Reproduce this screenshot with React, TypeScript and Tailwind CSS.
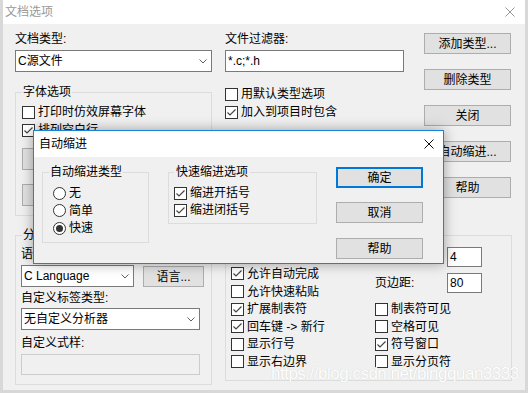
import React from 'react';

const Check = ({ checked }: { checked?: boolean }) => (
  <span className="w-[13px] h-[13px] border border-[#333] bg-white flex items-center justify-center shrink-0">
    {checked && (
      <svg width="11" height="11" viewBox="0 0 11 11">
        <path d="M1.5 5.5 L4 8 L9.5 2.5" fill="none" stroke="#444" strokeWidth="1.2" />
      </svg>
    )}
  </span>
);

const Radio = ({ checked }: { checked?: boolean }) => (
  <span className="w-[13px] h-[13px] rounded-full border border-[#333] bg-white flex items-center justify-center shrink-0">
    {checked && <span className="w-[7px] h-[7px] rounded-full bg-[#333]" />}
  </span>
);

const CheckRow = ({ label, checked, className = '' }: { label: string; checked?: boolean; className?: string }) => (
  <div className={`flex items-center gap-[3px] ${className}`}>
    <Check checked={checked} />
    <span className="whitespace-nowrap">{label}</span>
  </div>
);

const Button = ({ label, className = '' }: { label?: string; className?: string }) => (
  <div className={`w-[87px] h-[21px] bg-[#e1e1e1] border border-[#adadad] flex items-center justify-center ${className}`}>
    {label}
  </div>
);

const Combo = ({ value, className = '' }: { value: string; className?: string }) => (
  <div className={`h-[22px] border border-[#7a7a7a] bg-white flex items-center justify-between pl-[2px] pr-[4px] ${className}`}>
    <span>{value}</span>
    <svg width="8" height="5" viewBox="0 0 8 5">
      <path d="M0.5 0.5 L4 4 L7.5 0.5" fill="none" stroke="#606060" />
    </svg>
  </div>
);

const Group = ({
  title,
  className = '',
  legend = '',
  children,
}: {
  title: string;
  className?: string;
  legend?: string;
  children?: React.ReactNode;
}) => (
  <fieldset className={`border border-[#dcdcdc] ${className}`}>
    <legend className={`h-[14px] leading-[14px] whitespace-nowrap ${legend}`}>{title}</legend>
    {children}
  </fieldset>
);

const CloseX = ({ color }: { color: string }) => (
  <svg width="10" height="10" viewBox="0 0 10 10">
    <path d="M0.5 0.5 L9.5 9.5 M9.5 0.5 L0.5 9.5" stroke={color} strokeWidth="1" />
  </svg>
);

export default function App() {
  return (
    <div className="relative w-[528px] h-[393px] overflow-hidden bg-[#d8d8d8] text-[12px] leading-[14px] text-black font-['Liberation_Sans','Noto_Sans_CJK_SC',sans-serif]">
      {/* 文档选项 window */}
      <div className="ml-[3px] w-[522px] h-[390px] bg-[#f0f0f0] flex flex-col">
        <div className="h-[24px] bg-white flex items-center justify-between pl-[2px] pr-[10px]">
          <span className="text-[#999]">文档选项</span>
          <CloseX color="#999" />
        </div>

        <div className="flex pt-[8px] pl-[12px]">
          <div className="w-[197px] flex flex-col">
            <div>文档类型:</div>
            <Combo value="C源文件" className="mt-[4px]" />
            <Group title="字体选项" className="mt-[13px] h-[131px] pl-[6px]" legend="px-[1px]">
              <CheckRow label="打印时仿效屏幕字体" className="mt-[4px] h-[18px]" />
              <CheckRow label="排列空白行" checked className="h-[18px]" />
              {/* buttons hidden behind the 自动缩进 dialog */}
              <Button className="mt-[9px] !w-[100px] !h-[22px]" />
              <Button className="mt-[14px] !w-[100px] !h-[22px]" />
            </Group>
          </div>

          <div className="ml-[13px] w-[179px] flex flex-col">
            <div>文件过滤器:</div>
            <div className="mt-[4px] h-[22px] border border-[#7a7a7a] bg-white flex items-center pl-[2px]">*.c;*.h</div>
            <CheckRow label="用默认类型选项" className="mt-[13px] h-[18px]" />
            <CheckRow label="加入到项目时包含" checked className="h-[18px]" />
          </div>

          <div className="ml-[20px] mt-[1px] flex flex-col gap-[15px]">
            <Button label="添加类型..." />
            <Button label="删除类型" />
            <Button label="关闭" />
            <Button label="自动缩进..." />
            <Button label="帮助" />
          </div>
        </div>

        <div className="flex pl-[12px] mt-[12px]">
          <Group title="分析器" className="w-[197px] h-[157px] pl-[5px]" legend="ml-[1px] px-[1px]">
            <div className="mt-[5px]">语言:</div>
            <div className="flex items-start mt-[4px]">
              <Combo value="C Language" className="w-[113px]" />
              <Button label="语言..." className="ml-[9px] mt-[1px] !w-[61px]" />
            </div>
            <div className="mt-[4px]">自定义标签类型:</div>
            <Combo value="无自定义分析器" className="mt-[3px] w-[179px]" />
            <div className="mt-[6px]">自定义式样:</div>
            <div className="mt-[4px] w-[179px] h-[21px] border border-[#cccccc] bg-[#f0f0f0]" />
          </Group>

          <Group title="编辑选项" className="ml-[13px] w-[287px] h-[153px] pl-[5px]" legend="ml-[1px] px-[1px]">
            <div className="flex">
              <div className="w-[144px] pt-[23.2px] flex flex-col">
                <CheckRow label="允许自动完成" checked className="h-[17.6px]" />
                <CheckRow label="允许快速粘贴" className="h-[17.6px]" />
                <CheckRow label="扩展制表符" checked className="h-[17.6px]" />
                <CheckRow label="回车键 -> 新行" checked className="h-[17.6px]" />
                <CheckRow label="显示行号" className="h-[17.6px]" />
                <CheckRow label="显示右边界" className="h-[17.6px]" />
              </div>
              <div className="pt-[5px] flex flex-col">
                <div className="flex items-center h-[20px]">
                  <span className="w-[72px]" />
                  <div className="w-[35px] h-[20px] border border-[#7a7a7a] bg-white flex items-center pl-[2px]">4</div>
                </div>
                <div className="flex items-center h-[20px] mt-[6px]">
                  <span className="w-[72px]">页边距:</span>
                  <div className="w-[35px] h-[20px] border border-[#7a7a7a] bg-white flex items-center pl-[2px]">80</div>
                </div>
                <div className="mt-[7.4px] flex flex-col">
                  <CheckRow label="制表符可见" className="h-[17.6px]" />
                  <CheckRow label="空格可见" className="h-[17.6px]" />
                  <CheckRow label="符号窗口" checked className="h-[17.6px]" />
                  <CheckRow label="显示分页符" className="h-[17.6px]" />
                </div>
              </div>
            </div>
          </Group>
        </div>
      </div>

      {/* 自动缩进 dialog */}
      <div className="absolute left-[33px] top-[130px] w-[411px] h-[134px] border border-[#1883d7] bg-[#f0f0f0] shadow-[0_0_12px_rgba(0,0,0,0.35)] flex flex-col">
        <div className="h-[26px] bg-white flex items-center justify-between pl-[5px] pr-[9px]">
          <span>自动缩进</span>
          <CloseX color="#111" />
        </div>
        <div className="flex pl-[8px]">
          <Group title="自动缩进类型" className="mt-[8px] w-[107px] h-[78px] pl-[6px]" legend="px-[1px]">
            <div className="ml-[4px] mt-[5.25px] flex flex-col">
              {[
                { l: '无', c: false },
                { l: '简单', c: false },
                { l: '快速', c: true },
              ].map((r) => (
                <div key={r.l} className="flex items-center gap-[3px] h-[17.5px]">
                  <Radio checked={r.c} />
                  <span>{r.l}</span>
                </div>
              ))}
            </div>
          </Group>
          <Group title="快速缩进选项" className="ml-[19px] mt-[8px] w-[149px] h-[59px] pl-[5px]" legend="px-[2px]">
            <div className="mt-[5.5px] flex flex-col">
              <CheckRow label="缩进开括号" checked className="h-[17px]" />
              <CheckRow label="缩进闭括号" checked className="h-[17px]" />
            </div>
          </Group>
          <div className="ml-[19px] mt-[10px] flex flex-col">
            <Button label="确定" className="!border-2 !border-[#0078d7]" />
            <Button label="取消" className="mt-[14px]" />
            <Button label="帮助" className="mt-[15px]" />
          </div>
        </div>
      </div>

      {/* watermark */}
      <div className="absolute left-[271px] top-[369px] text-[17px] leading-[10px] tracking-[-0.5px] whitespace-nowrap text-white font-['Liberation_Sans',sans-serif] [text-shadow:0_0_1px_#c4c4c4]">
        https://blog.csdn.net/bingquan3333
      </div>
    </div>
  );
}
